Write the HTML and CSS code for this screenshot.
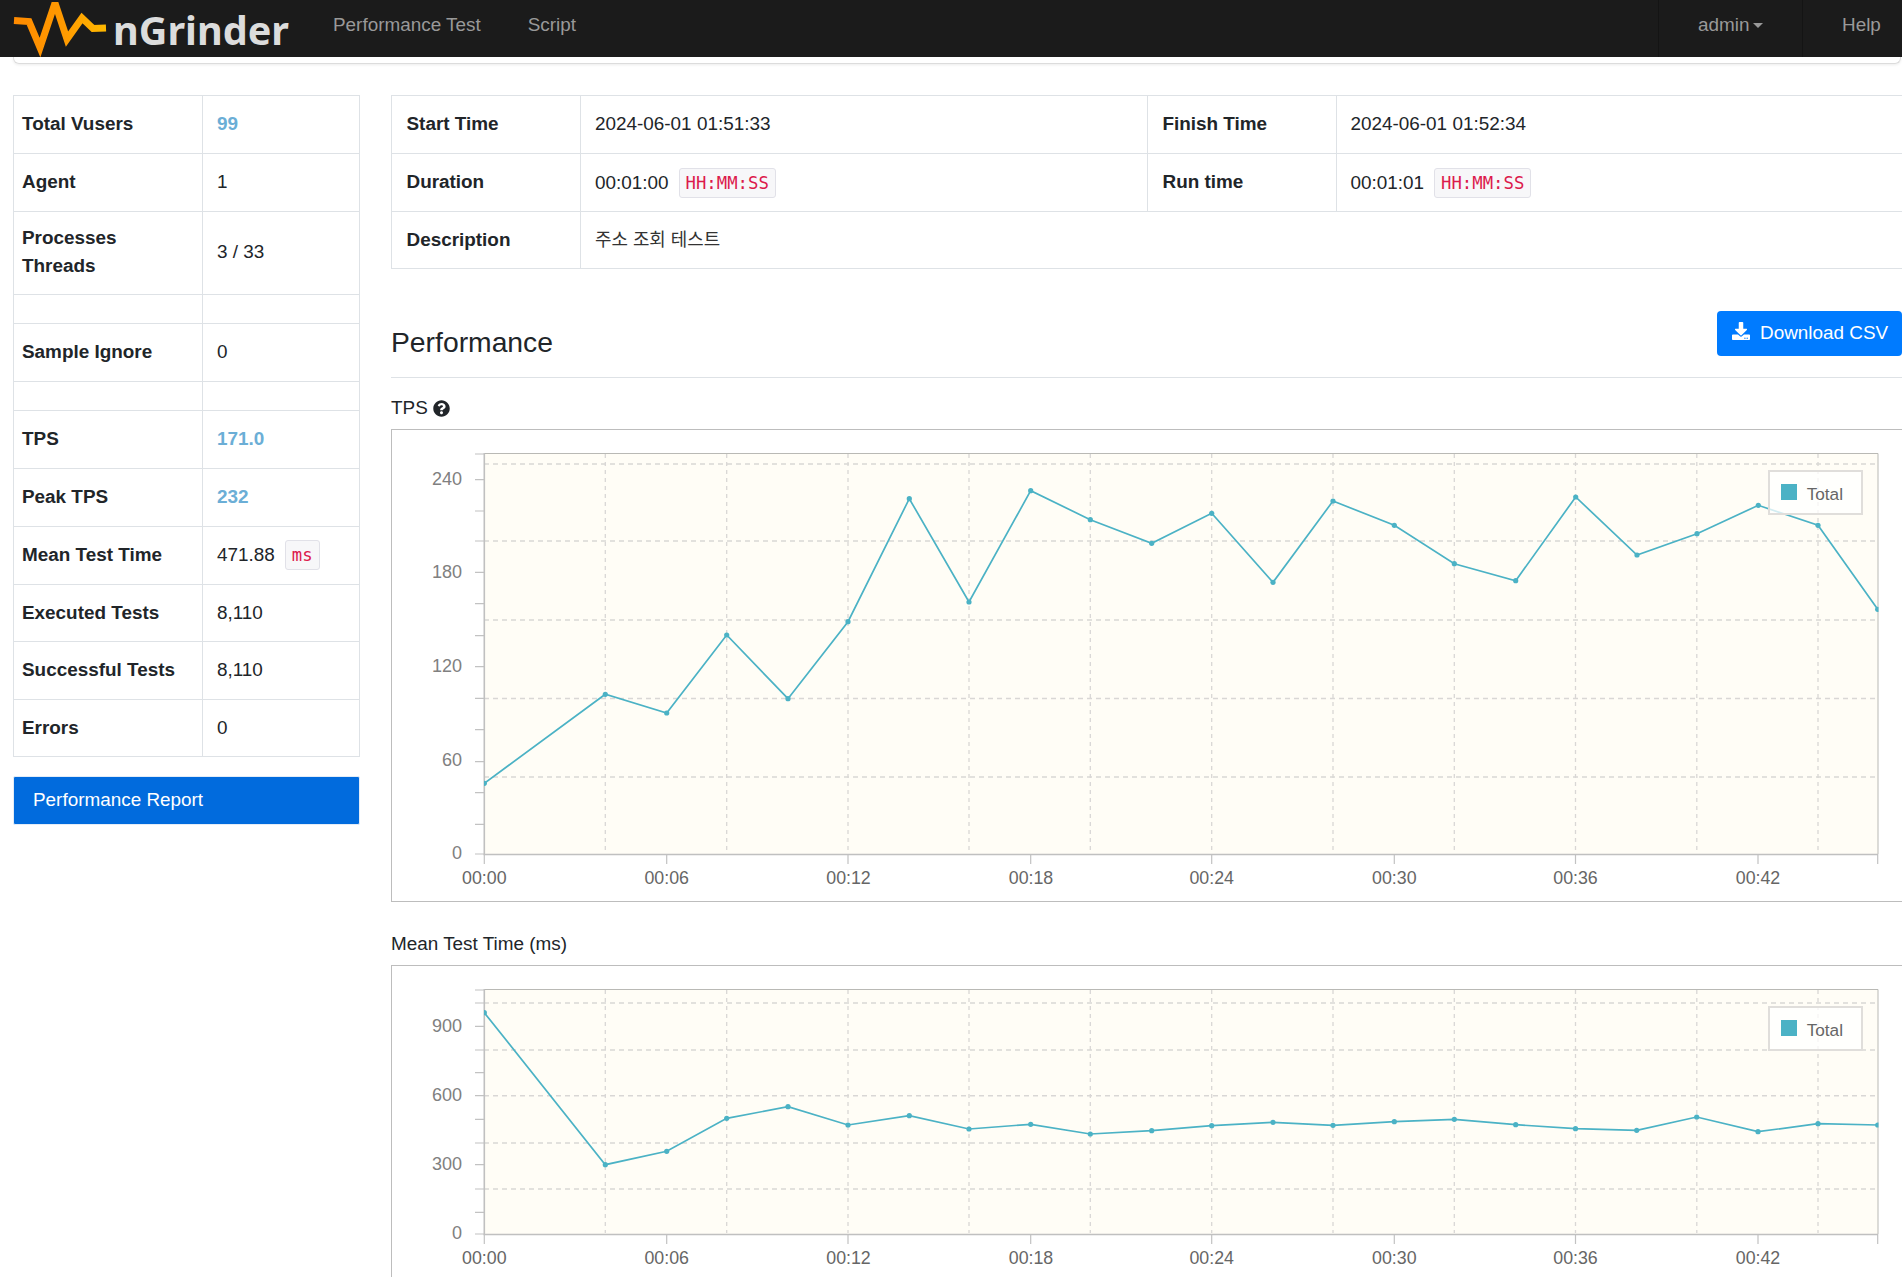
FILE: index.html
```html
<!DOCTYPE html>
<html lang="en">
<head>
<meta charset="utf-8">
<title>nGrinder</title>
<link rel="stylesheet" href="styles.css">
</head>
<body>
<nav class="navbar">
  <a class="brand">
    <svg class="brand-mark" viewBox="0 0 110 57" width="110" height="57">
      <defs>
        <linearGradient id="logoGrad" x1="0" x2="1" y1="0" y2="0">
          <stop offset="0" stop-color="#ff8a00"/>
          <stop offset="0.55" stop-color="#ff9a00"/>
          <stop offset="1" stop-color="#ffb900"/>
        </linearGradient>
      </defs>
      <path d="M14 20.5L29 21.5L40 47.5L55 3L67 39L82 18L93 28.5L106 28" fill="none" stroke="url(#logoGrad)" stroke-width="7" stroke-linejoin="miter" stroke-miterlimit="3"/>
    </svg>
    <span class="brand-name">nGrinder</span>
  </a>
  <a class="nav-link">Performance Test</a>
  <a class="nav-link">Script</a>
  <div class="nav-right">
    <a class="nav-cell nav-user">admin<span class="caret"></span></a>
    <a class="nav-cell nav-help">Help</a>
  </div>
</nav>
<div class="nav-shelf"></div>

<main class="layout">
  <aside class="side">
    <table class="info side-table">
      <tr><th>Total Vusers</th><td class="hl">99</td></tr>
      <tr><th>Agent</th><td>1</td></tr>
      <tr class="tall"><th>Processes<br>Threads</th><td>3 / 33</td></tr>
      <tr class="gap"><th></th><td></td></tr>
      <tr><th>Sample Ignore</th><td>0</td></tr>
      <tr class="gap"><th></th><td></td></tr>
      <tr><th>TPS</th><td class="hl">171.0</td></tr>
      <tr><th>Peak TPS</th><td class="hl">232</td></tr>
      <tr class="slim"><th>Mean Test Time</th><td>471.88<code class="unit">ms</code></td></tr>
      <tr class="slim"><th>Executed Tests</th><td>8,110</td></tr>
      <tr class="slim"><th>Successful Tests</th><td>8,110</td></tr>
      <tr class="slim"><th>Errors</th><td>0</td></tr>
    </table>
    <a class="report-link">Performance Report</a>
  </aside>

  <section class="content">
    <table class="info top-table">
      <tr><th class="c1">Start Time</th><td class="c2">2024-06-01 01:51:33</td><th class="c3">Finish Time</th><td>2024-06-01 01:52:34</td></tr>
      <tr><th>Duration</th><td>00:01:00<code class="unit">HH:MM:SS</code></td><th>Run time</th><td>00:01:01<code class="unit">HH:MM:SS</code></td></tr>
      <tr class="last"><th>Description</th><td colspan="3" class="ko">주소 조회 테스트</td></tr>
    </table>

    <header class="section-head">
      <h2>Performance</h2>
      <a class="btn-csv">
        <svg viewBox="0 0 512 512" width="18" height="18"><path fill="#fff" d="M216 0h80c13.3 0 24 10.7 24 24v168h87.7c17.8 0 26.7 21.5 14.1 34.1L269.7 378.3c-7.5 7.5-19.8 7.5-27.3 0L90.1 226.1c-12.6-12.6-3.7-34.1 14.1-34.1H192V24c0-13.3 10.7-24 24-24zm296 376v112c0 13.3-10.7 24-24 24H24c-13.3 0-24-10.7-24-24V376c0-13.3 10.7-24 24-24h146.7l49 49c20.1 20.1 52.5 20.1 72.6 0l49-49H488c13.3 0 24 10.7 24 24zm-124 88c0-11-9-20-20-20s-20 9-20 20 9 20 20 20 20-9 20-20zm64 0c0-11-9-20-20-20s-20 9-20 20 9 20 20 20 20-9 20-20z"/></svg>
        Download CSV
      </a>
    </header>

    <div class="chart-title tps-title">TPS
      <svg viewBox="0 0 512 512" width="17" height="17"><path fill="#212529" d="M504 256c0 136.997-111.043 248-248 248S8 392.997 8 256C8 119.083 119.043 8 256 8s248 111.083 248 248zM262.655 90c-54.497 0-89.255 22.957-116.549 63.758-3.536 5.286-2.353 12.415 2.715 16.258l34.699 26.31c5.205 3.947 12.621 3.008 16.665-2.122 17.864-22.658 30.113-35.797 57.303-35.797 20.429 0 45.698 13.148 45.698 32.958 0 14.976-12.363 22.667-32.534 33.976C247.128 238.528 216 254.941 216 296v4c0 6.627 5.373 12 12 12h56c6.627 0 12-5.373 12-12v-1.333c0-28.462 83.186-29.647 83.186-106.667 0-58.002-60.165-102-116.531-102zM256 338c-25.365 0-46 20.635-46 46 0 25.364 20.635 46 46 46s46-20.636 46-46c0-25.365-20.635-46-46-46z"/></svg>
    </div>
    <div class="chart-box box-tps">
      <svg class="chart" viewBox="392 430 1512 471" width="1512" height="471">
        <defs>
          <clipPath id="plotA"><rect x="484" y="453" width="1394.5" height="401"/></clipPath>
          <marker id="dotA" markerUnits="userSpaceOnUse" markerWidth="8" markerHeight="8" refX="4" refY="4"><circle cx="4" cy="4" r="2.6" fill="#4bb2c5"/></marker>
        </defs>
        <rect class="plot-bg" x="484" y="453" width="1394" height="401"/>
        <path class="grid" d="M484 464H1878M484 541H1878M484 620H1878M484 698.5H1878M484 777H1878"/>
        <path class="grid grid-v" d="M605.3 454V853M726.7 454V853M848 454V853M969 454V853M1090.3 454V853M1211.7 454V853M1333 454V853M1454.3 454V853M1575.5 454V853M1696.8 454V853M1818 454V853"/>
        <path class="ticks" d="M475 454H484M475 479.7H484M475 511H484M475 541H484M475 572.3H484M475 603.7H484M475 635.7H484M475 666.7H484M475 698.3H484M475 729.7H484M475 761.7H484M475 792.7H484M475 824.3H484M475 854H484"/>
        <path class="ticks" d="M484.3 854V864M666.7 854V864M848 854V864M1030.7 854V864M1211.7 854V864M1394.3 854V864M1575.5 854V864M1758 854V864M1877.7 854V864"/>
        <path class="frame" d="M484 453.5H1878V854"/>
        <path class="axis" d="M484.3 453V854.5H1878"/>
        <polyline class="series" clip-path="url(#plotA)" marker-start="url(#dotA)" marker-mid="url(#dotA)" marker-end="url(#dotA)" points="484.3,783.3 605.3,694.3 666.7,713 726.7,635 788,698.7 848,621.7 909.3,498.7 969,602 1030.7,490.7 1090.3,519.7 1151.7,543.3 1211.7,513.3 1273,582.3 1333,501 1394.3,525.3 1454.3,563.7 1515.7,580.7 1575.7,497 1637,555 1697,533.7 1758.3,505.3 1818,525.3 1877.7,609.3"/>
        <g class="ylabels">
          <text x="462" y="484.5">240</text>
          <text x="462" y="577.5">180</text>
          <text x="462" y="671.5">120</text>
          <text x="462" y="766">60</text>
          <text x="462" y="859">0</text>
        </g>
        <g class="xlabels">
          <text x="484.3" y="884">00:00</text>
          <text x="666.7" y="884">00:06</text>
          <text x="848.5" y="884">00:12</text>
          <text x="1031" y="884">00:18</text>
          <text x="1211.7" y="884">00:24</text>
          <text x="1394.3" y="884">00:30</text>
          <text x="1575.5" y="884">00:36</text>
          <text x="1758" y="884">00:42</text>
        </g>
        <rect class="legend" x="1769" y="471" width="93" height="43"/>
        <rect class="swatch" x="1781" y="484" width="16" height="16"/>
        <text class="legend-text" x="1806.7" y="500">Total</text>
      </svg>
    </div>

    <div class="chart-title mean-title">Mean Test Time (ms)</div>
    <div class="chart-box box-mean">
      <svg class="chart" viewBox="392 966 1512 320" width="1512" height="320">
        <defs>
          <clipPath id="plotB"><rect x="484" y="989" width="1394.5" height="245"/></clipPath>
          <marker id="dotB" markerUnits="userSpaceOnUse" markerWidth="8" markerHeight="8" refX="4" refY="4"><circle cx="4" cy="4" r="2.6" fill="#4bb2c5"/></marker>
        </defs>
        <rect class="plot-bg" x="484" y="989" width="1394" height="245"/>
        <path class="grid" d="M484 1003H1878M484 1050H1878M484 1095.7H1878M484 1143H1878M484 1189H1878"/>
        <path class="grid grid-v" d="M605.3 990V1233M726.7 990V1233M848 990V1233M969 990V1233M1090.3 990V1233M1211.7 990V1233M1333 990V1233M1454.3 990V1233M1575.5 990V1233M1696.8 990V1233M1818 990V1233"/>
        <path class="ticks" d="M475 990H484M475 1003H484M475 1026.3H484M475 1050H484M475 1072.7H484M475 1095.7H484M475 1119.3H484M475 1143H484M475 1164.7H484M475 1189H484M475 1212.3H484M475 1234H484"/>
        <path class="ticks" d="M484.3 1234V1244M666.7 1234V1244M848 1234V1244M1030.7 1234V1244M1211.7 1234V1244M1394.3 1234V1244M1575.5 1234V1244M1758 1234V1244M1877.7 1234V1244"/>
        <path class="frame" d="M484 989.5H1878V1234"/>
        <path class="axis" d="M484.3 989V1234.5H1878"/>
        <polyline class="series" clip-path="url(#plotB)" marker-start="url(#dotB)" marker-mid="url(#dotB)" marker-end="url(#dotB)" points="484.3,1012.7 605.3,1164.7 666.7,1151.3 726.7,1118.3 788,1106.7 848,1125 909.3,1115.7 969,1129 1030.7,1124.3 1090.3,1134 1151.7,1130.7 1211.7,1125.7 1273,1122.3 1333,1125.3 1394.3,1121.7 1454.3,1119.3 1515.7,1124.7 1575.5,1128.7 1636.7,1130.3 1696.7,1117 1758,1131.7 1818,1123.7 1877.7,1125"/>
        <g class="ylabels">
          <text x="462" y="1031.5">900</text>
          <text x="462" y="1101">600</text>
          <text x="462" y="1170">300</text>
          <text x="462" y="1239">0</text>
        </g>
        <g class="xlabels">
          <text x="484.3" y="1264">00:00</text>
          <text x="666.7" y="1264">00:06</text>
          <text x="848.5" y="1264">00:12</text>
          <text x="1031" y="1264">00:18</text>
          <text x="1211.7" y="1264">00:24</text>
          <text x="1394.3" y="1264">00:30</text>
          <text x="1575.5" y="1264">00:36</text>
          <text x="1758" y="1264">00:42</text>
        </g>
        <rect class="legend" x="1769" y="1007" width="93" height="43"/>
        <rect class="swatch" x="1781" y="1020" width="16" height="16"/>
        <text class="legend-text" x="1806.7" y="1036">Total</text>
      </svg>
    </div>
  </section>
</main>
</body>
</html>
```

FILE: styles.css
```css
* { box-sizing: border-box; }
html, body { margin: 0; padding: 0; height: 1277px; overflow: hidden; background: #fff; }
body {
  font-family: "Liberation Sans", "Noto Sans CJK KR", sans-serif;
  font-size: 18.9px;
  line-height: 28.5px;
  color: #212529;
}

.navbar {
  display: flex;
  align-items: stretch;
  height: 57px;
  background: #1b1b1b;
  position: relative;
  z-index: 2;
}
.brand { display: flex; align-items: flex-start; width: 333px; }
.brand-mark { flex: none; }
.brand-name {
  font-family: "Noto Sans", sans-serif;
  font-weight: 700;
  font-size: 39.6px;
  line-height: 60px;
  color: #dcdcdc;
  margin-left: 3px;
}
.nav-link {
  display: flex;
  align-items: center;
  padding: 0 47px 7px 0;
  color: #999;
}
.nav-right { display: flex; margin-left: auto; }
.nav-cell {
  display: flex;
  align-items: center;
  padding: 0 0 7px 39px;
  color: #999;
  border-left: 1px solid #141414;
}
.nav-user { width: 144px; }
.nav-help { width: 100px; }
.caret {
  width: 0;
  height: 0;
  margin-left: 4px;
  margin-top: 1px;
  border-top: 5px solid #999;
  border-left: 5px solid transparent;
  border-right: 5px solid transparent;
}
.nav-shelf {
  height: 7px;
  margin: 0 1px 0 13px;
  border: 1px solid #dcdcdc;
  border-top: 0;
  border-radius: 0 0 6px 6px;
  box-shadow: 0 1px 3px rgba(0, 0, 0, .08);
}

.layout {
  display: grid;
  grid-template-columns: 347px 1600px;
  column-gap: 31px;
  padding: 31px 0 0 13px;
}

.info { border-collapse: collapse; table-layout: fixed; }
.info th, .info td {
  border: 1px solid #dee2e6;
  height: 58px;
  padding: 0;
  vertical-align: middle;
  text-align: left;
  font-weight: 400;
}
.info th { font-weight: 700; }
.info .tall th, .info .tall td { height: 83px; padding-bottom: 2px; }
.info .gap th, .info .gap td { height: 29px; }
.info .slim th, .info .slim td { height: 57.5px; }
.info .last th, .info .last td { height: 57px; }
.hl { color: #6baed6; font-weight: 700 !important; }
.info .ko { font-size: 17.9px; color: #333; }

.side-table { width: 347px; }
.side-table th { width: 189px; padding-left: 8px; }
.side-table td { padding-left: 14px; }

.top-table { width: 1600px; }
.top-table th { padding-left: 14.5px; }
.top-table td { padding-left: 14px; }
.top-table .c1 { width: 189px; }
.top-table .c2 { width: 567px; }
.top-table .c3 { width: 188.5px; }

.unit {
  display: inline-block;
  font-family: "DejaVu Sans Mono", monospace;
  font-size: 17.3px;
  line-height: 28px;
  height: 30px;
  padding: 0 6px;
  margin-left: 10px;
  color: #dc1a4c;
  background: #f7f7f9;
  border: 1px solid #e1e1e8;
  border-radius: 3px;
  vertical-align: baseline;
}

.report-link {
  display: block;
  margin-top: 19px;
  height: 49px;
  line-height: 46px;
  padding-left: 19px;
  color: #fff;
  background: #016bdd;
  border: 1px solid #e3ecf7;
  border-radius: 2px;
}

.section-head {
  display: flex;
  justify-content: space-between;
  align-items: flex-start;
  width: 1511px;
  margin-top: 42px;
  height: 67px;
  border-bottom: 1px solid #dee2e6;
}
.section-head h2 {
  margin: 14px 0 0;
  font-weight: 400;
  font-size: 28.3px;
  line-height: 34px;
}
.btn-csv {
  display: flex;
  align-items: center;
  gap: 10px;
  height: 45px;
  width: 185px;
  padding-left: 15px;
  font-size: 18.9px;
  color: #fff;
  background: #007bff;
  border-radius: 4px;
}
.btn-csv svg { margin-top: -5px; }

.chart-title { display: flex; align-items: center; gap: 5px; height: 28px; padding-top: 2px; }
.tps-title { margin-top: 15px; }
.mean-title { margin-top: 27px; }
.chart-box {
  margin-top: 8px;
  width: 1600px;
  border: 1px solid #bdbdbd;
  background: #fff;
}
.box-tps { height: 473px; }
.box-mean { height: 330px; }
.chart { display: block; }

.plot-bg { fill: #fffdf6; }
.grid { fill: none; stroke: #d9d7d5; stroke-width: 1.6; stroke-dasharray: 5 4; }
.grid-v { stroke-width: 1.3; stroke-dasharray: 4 4; }
.ticks { fill: none; stroke: #c2c2c2; stroke-width: 1.2; }
.frame { fill: none; stroke: #b9b9b5; stroke-width: 1; }
.axis { fill: none; stroke: #c0c0c0; stroke-width: 1.6; }
.series { fill: none; stroke: #4bb2c5; stroke-width: 1.7; }
.ylabels text { font-size: 18px; fill: #808080; text-anchor: end; }
.xlabels text { font-size: 17.8px; fill: #666; text-anchor: middle; }
.legend { fill: rgba(255, 255, 255, .75); stroke: #e0dedb; stroke-width: 2; }
.swatch { fill: #4bb2c5; }
.legend-text { font-size: 17.2px; fill: #666; }
```
